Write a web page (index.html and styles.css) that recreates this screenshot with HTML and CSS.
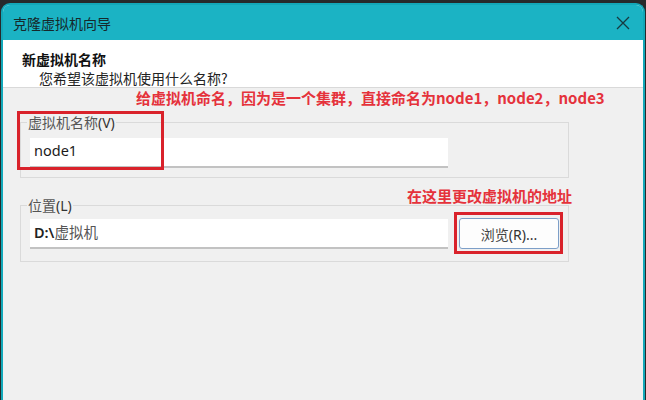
FILE: index.html
```html
<!DOCTYPE html>
<html lang="zh-CN">
<head>
  <meta charset="UTF-8">
  <title>克隆虚拟机向导</title>
  <link rel="stylesheet" href="styles.css">
</head>
<body>

  <div class="window">
    <!-- 标题栏 -->
    <div class="titlebar">
      <span class="title">克隆虚拟机向导</span>
      <svg class="close" width="14" height="14" viewBox="0 0 14 14">
        <path d="M1 1 L13 13 M13 1 L1 13" stroke="#173a40" stroke-width="1.3" fill="none"/>
      </svg>
    </div>

    <div class="header">
      <div class="header-title">新虚拟机名称</div>
      <div class="header-sub">您希望该虚拟机使用什么名称?</div>
    </div>

    <div class="content">
      <fieldset class="group">
        <legend>虚拟机名称<span class="latin">(V)</span></legend>
        <div class="field">node1</div>
      </fieldset>

      <fieldset class="group group-path">
        <legend>位置<span class="latin">(L)</span></legend>
        <div class="row">
          <div class="field"><span class="latin-bold">D:\</span><span class="cjk-grey">虚拟机</span></div>
          <button class="browse">浏览<span class="latin">(R)...</span></button>
        </div>
      </fieldset>

      <!-- 标注 -->
      <div class="note note-name">给虚拟机命名，因为是一个集群，直接命名为node1，node2，node3</div>
      <div class="note note-path">在这里更改虚拟机的地址</div>
      <div class="mark mark-name"></div>
      <div class="mark mark-path"></div>
    </div>
  </div>

</body>
</html>
```

FILE: styles.css
```css
* {
  box-sizing: border-box;
}

body {
  margin: 0;
  background: #262a2b;
  font-family: "Noto Sans", "Noto Sans CJK SC", sans-serif;
  overflow: hidden;
}

.window {
  margin: 3px 1px 0 1px;
  height: 397px;
  border: 2px solid #13a8b9;
  border-bottom: none;
  border-radius: 9px 9px 0 0;
  overflow: hidden;
  display: flex;
  flex-direction: column;
  background: #f0f0f0;
}

.titlebar {
  height: 35px;
  background: #1bb3c4;
  display: flex;
  align-items: center;
  justify-content: space-between;
  padding: 0 13px 0 10px;
  flex-shrink: 0;
}

.title {
  font-family: "Noto Sans CJK SC", sans-serif;
  font-size: 14px;
  color: #16282b;
  line-height: 18px;
}

.close {
  display: block;
  margin-top: 1px;
}

.header {
  height: 48px;
  background: #fff;
  border-bottom: 1px solid #d9d9d9;
  padding: 10px 0 0 19px;
  flex-shrink: 0;
}

.header-title {
  font-family: "Noto Sans CJK SC", sans-serif;
  font-weight: bold;
  font-size: 14px;
  line-height: 18px;
  color: #111;
}

.header-sub {
  font-family: "Noto Sans CJK SC", sans-serif;
  font-size: 14px;
  line-height: 18px;
  margin: 1px 0 0 17px;
  color: #222;
}

.content {
  position: relative;
  flex: 1;
  padding: 24px 0 0 17px;
}

.group {
  width: 549px;
  margin: 0;
  border: 1px solid #dadada;
  padding: 5px 0 9px 9px;
}

.group legend {
  font-family: "Noto Sans CJK SC", sans-serif;
  font-size: 14px;
  line-height: 20px;
  color: #555;
  padding: 0 1px;
  margin-left: -3px;
}

.group-path {
  margin-top: 17px;
  padding: 2px 0 12px 9px;
}

.latin {
  font-family: "Noto Sans", sans-serif;
  color: #333;
}

.field {
  width: 418px;
  height: 30px;
  background: #fff;
  border-bottom: 2px solid #c2c2c2;
  padding: 0 4px;
  font-size: 14.5px;
  line-height: 25px;
  color: #1a1a1a;
}

.row {
  display: flex;
  align-items: flex-start;
  gap: 11px;
}

.row .field {
  margin-top: 1px;
}

.latin-bold {
  font-family: "Noto Sans", sans-serif;
  font-weight: 600;
  color: #222;
}

.cjk-grey {
  font-family: "Noto Sans CJK SC", sans-serif;
  color: #555;
}

.browse {
  width: 100px;
  height: 31px;
  background: #fdfdfd;
  border: 1px solid #7d9fc8;
  border-radius: 3px;
  font-family: "Noto Sans CJK SC", sans-serif;
  font-size: 14px;
  color: #444;
  padding: 0;
}

/* 标注 */
.note {
  position: absolute;
  font-family: "Noto Sans CJK SC", sans-serif;
  font-weight: bold;
  font-size: 15px;
  line-height: 18px;
  color: #e5323b;
  white-space: nowrap;
}

.note-name {
  top: 1px;
  left: 133px;
}

.note-path {
  top: 99px;
  left: 404px;
}

.mark {
  position: absolute;
  border: 3px solid #d9222b;
}

.mark-name {
  top: 23px;
  left: 14px;
  width: 147px;
  height: 59px;
}

.mark-path {
  top: 124px;
  left: 451px;
  width: 109px;
  height: 42px;
}
```
